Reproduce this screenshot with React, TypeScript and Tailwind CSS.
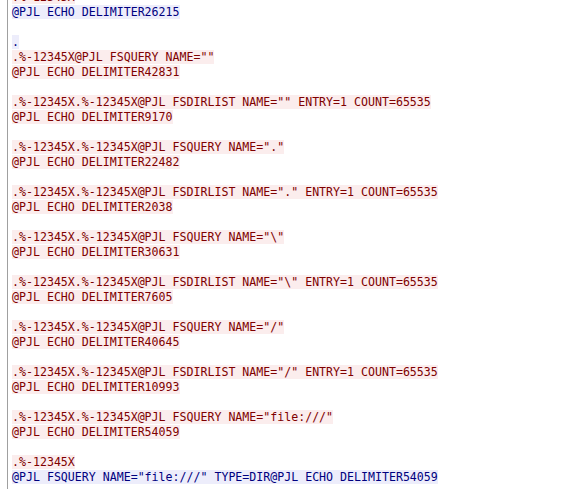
import React from "react";

type Line = { text: string; side?: "client" | "server" };

const lines: Line[] = [
  { text: ".%-12345X", side: "client" },
  { text: "@PJL ECHO DELIMITER26215", side: "server" },
  { text: "" },
  { text: ".", side: "server" },
  { text: '.%-12345X@PJL FSQUERY NAME=""', side: "client" },
  { text: "@PJL ECHO DELIMITER42831", side: "client" },
  { text: "" },
  { text: '.%-12345X.%-12345X@PJL FSDIRLIST NAME="" ENTRY=1 COUNT=65535', side: "client" },
  { text: "@PJL ECHO DELIMITER9170", side: "client" },
  { text: "" },
  { text: '.%-12345X.%-12345X@PJL FSQUERY NAME="."', side: "client" },
  { text: "@PJL ECHO DELIMITER22482", side: "client" },
  { text: "" },
  { text: '.%-12345X.%-12345X@PJL FSDIRLIST NAME="." ENTRY=1 COUNT=65535', side: "client" },
  { text: "@PJL ECHO DELIMITER2038", side: "client" },
  { text: "" },
  { text: '.%-12345X.%-12345X@PJL FSQUERY NAME="\\"', side: "client" },
  { text: "@PJL ECHO DELIMITER30631", side: "client" },
  { text: "" },
  { text: '.%-12345X.%-12345X@PJL FSDIRLIST NAME="\\" ENTRY=1 COUNT=65535', side: "client" },
  { text: "@PJL ECHO DELIMITER7605", side: "client" },
  { text: "" },
  { text: '.%-12345X.%-12345X@PJL FSQUERY NAME="/"', side: "client" },
  { text: "@PJL ECHO DELIMITER40645", side: "client" },
  { text: "" },
  { text: '.%-12345X.%-12345X@PJL FSDIRLIST NAME="/" ENTRY=1 COUNT=65535', side: "client" },
  { text: "@PJL ECHO DELIMITER10993", side: "client" },
  { text: "" },
  { text: '.%-12345X.%-12345X@PJL FSQUERY NAME="file:///"', side: "client" },
  { text: "@PJL ECHO DELIMITER54059", side: "client" },
  { text: "" },
  { text: ".%-12345X", side: "client" },
  { text: '@PJL FSQUERY NAME="file:///" TYPE=DIR@PJL ECHO DELIMITER54059', side: "server" },
];

export default function App() {
  return (
    <div className="h-[499px] w-[562px] overflow-hidden bg-white pl-[7px]">
      <div className="h-full border-l border-[#a0a0a0] pl-[4px]">
        {/* scrolled stream view: first line is partly above the top edge */}
        <div className="-mt-[10px] flex flex-col font-['DejaVu_Sans_Mono',monospace] text-[11.6px] leading-[15px]">
          {lines.map((line, i) => (
            <div key={i} className="h-[15px] whitespace-pre">
              {line.text && (
                <span
                  className={
                    line.side === "server"
                      ? "bg-[#ededfb] text-[#00007f]"
                      : "bg-[#fbeded] text-[#7f0000]"
                  }
                >
                  {line.text}
                </span>
              )}
            </div>
          ))}
        </div>
      </div>
    </div>
  );
}
